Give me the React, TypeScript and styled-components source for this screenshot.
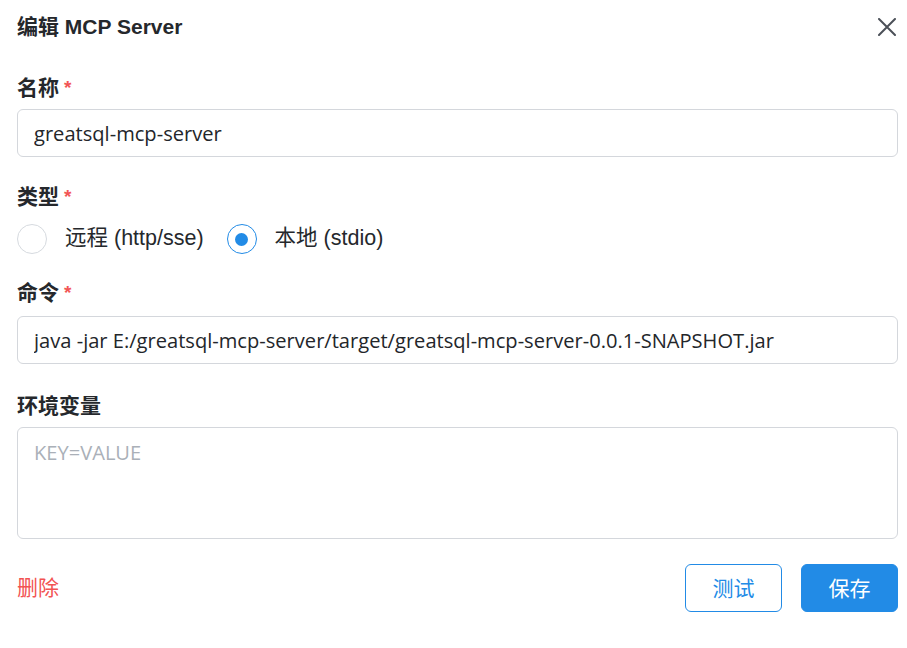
import React, { useState } from "react";
import styled, { createGlobalStyle } from "styled-components";

const Global = createGlobalStyle`
  html, body { margin: 0; padding: 0; background: #ffffff; }
  body { font-family: "Liberation Sans", Arial, "Noto Sans CJK SC", sans-serif; color: #1f2328; }
  * { box-sizing: border-box; }
`;

const BLUE = "#228be6";

const Dialog = styled.div`
  width: 907px;
  height: 648px;
  padding: 13px 9px 0 17px;
  display: flex;
  flex-direction: column;
  background: #fff;
`;

const Header = styled.div`
  display: flex;
  align-items: center;
  justify-content: space-between;
  height: 28px;
`;

const Title = styled.h2`
  margin: 0;
  font-size: 21px;
  line-height: 28px;
  height: 28px;
  font-weight: 700;
  color: #25282c;
  font-family: "Liberation Sans", Arial, "Noto Sans CJK SC", sans-serif;
`;

const CloseButton = styled.button`
  width: 28px;
  height: 28px;
  padding: 0;
  border: none;
  background: transparent;
  display: flex;
  align-items: center;
  justify-content: center;
  cursor: pointer;
  margin-right: -3px;
`;

const Form = styled.div`
  display: flex;
  flex-direction: column;
  margin-top: 35px;
  width: 881px;
`;

const Field = styled.div<{ $gap: number; $top: number }>`
  display: flex;
  flex-direction: column;
  gap: ${(p) => p.$gap}px;
  margin-top: ${(p) => p.$top}px;
`;

const Label = styled.div`
  height: 24px;
  display: flex;
  align-items: center;
  font-size: 21px;
  line-height: 1;
  font-weight: 700;
  color: #25282c;
  font-family: "Liberation Sans", Arial, "Noto Sans CJK SC", sans-serif;
  padding-bottom: 2px;
`;

const Req = styled.span`
  color: #f25656;
  margin-left: 5px;
  font-weight: 700;
  font-size: 19px;
  line-height: 1;
  align-self: flex-start;
  margin-top: 2px;
`;

const TextInput = styled.input`
  width: 100%;
  height: 48px;
  border: 1px solid #d4d7dc;
  border-radius: 6px;
  padding: 0 16px;
  font-size: 20.1px;
  font-family: "Open Sans", "Noto Sans CJK SC", sans-serif;
  color: #23262a;
  outline: none;
  background: #fff;
`;

const TextArea = styled.textarea`
  width: 100%;
  height: 112px;
  border: 1px solid #d4d7dc;
  border-radius: 6px;
  padding: 11px 16px;
  font-size: 20.1px;
  line-height: 28px;
  font-family: "Open Sans", "Noto Sans CJK SC", sans-serif;
  color: #23262a;
  resize: none;
  outline: none;
  display: block;
  &::placeholder { color: #aab0b8; }
`;

const RadioRow = styled.div`
  display: flex;
  align-items: center;
  height: 30px;
  gap: 23px;
`;

const RadioOption = styled.label`
  display: flex;
  align-items: center;
  height: 30px;
  gap: 18px;
  cursor: pointer;
  font-size: 21.5px;
  line-height: 1;
  color: #25282c;
  font-family: "Liberation Sans", Arial, "Noto Sans CJK SC", sans-serif;
`;

const RadioCircle = styled.span<{ $checked: boolean }>`
  width: 30px;
  height: 30px;
  flex: none;
  border-radius: 50%;
  border: 1px solid ${(p) => (p.$checked ? BLUE : "#d6dadf")};
  display: flex;
  align-items: center;
  justify-content: center;
  background: #fff;
  &::after {
    content: "";
    width: 13px;
    height: 13px;
    border-radius: 50%;
    background: ${BLUE};
    display: ${(p) => (p.$checked ? "block" : "none")};
  }
`;

const Footer = styled.div`
  display: flex;
  align-items: center;
  justify-content: space-between;
  margin-top: 25px;
  width: 881px;
  height: 48px;
`;

const DangerLink = styled.button`
  border: none;
  background: transparent;
  padding: 0 0 3px;
  color: #f25252;
  font-size: 21px;
  line-height: 1;
  font-family: "Noto Sans CJK SC", sans-serif;
  cursor: pointer;
`;

const Actions = styled.div`
  display: flex;
  gap: 19px;
`;

const Button = styled.button<{ $primary?: boolean }>`
  width: 97px;
  height: 48px;
  border-radius: 6px;
  border: 1px solid ${BLUE};
  background: ${(p) => (p.$primary ? BLUE : "#fff")};
  color: ${(p) => (p.$primary ? "#fff" : BLUE)};
  font-size: 21px;
  line-height: 1;
  font-family: "Noto Sans CJK SC", sans-serif;
  cursor: pointer;
  display: flex;
  align-items: center;
  justify-content: center;
  padding: 0 0 2px;
`;

export default function App() {
  const [type, setType] = useState<"remote" | "local">("local");
  return (
    <>
      <Global />
      <Dialog>
        <Header>
          <Title>编辑 MCP Server</Title>
          <CloseButton aria-label="close">
            <svg width="18" height="18" viewBox="0 0 18 18">
              <path d="M1 1 L17 17 M17 1 L1 17" stroke="#4b5058" strokeWidth="2" strokeLinecap="round" />
            </svg>
          </CloseButton>
        </Header>
        <Form>
          <Field $gap={9} $top={0}>
            <Label>
              名称<Req>*</Req>
            </Label>
            <TextInput defaultValue="greatsql-mcp-server" />
          </Field>
          <Field $gap={15} $top={28}>
            <Label>
              类型<Req>*</Req>
            </Label>
            <RadioRow>
              <RadioOption onClick={() => setType("remote")}>
                <RadioCircle $checked={type === "remote"} />
                远程 (http/sse)
              </RadioOption>
              <RadioOption onClick={() => setType("local")}>
                <RadioCircle $checked={type === "local"} />
                本地 (stdio)
              </RadioOption>
            </RadioRow>
          </Field>
          <Field $gap={11} $top={27}>
            <Label>
              命令<Req>*</Req>
            </Label>
            <TextInput defaultValue="java -jar E:/greatsql-mcp-server/target/greatsql-mcp-server-0.0.1-SNAPSHOT.jar" />
          </Field>
          <Field $gap={9} $top={30}>
            <Label>环境变量</Label>
            <TextArea placeholder="KEY=VALUE" />
          </Field>
        </Form>
        <Footer>
          <DangerLink>删除</DangerLink>
          <Actions>
            <Button>测试</Button>
            <Button $primary>保存</Button>
          </Actions>
        </Footer>
      </Dialog>
    </>
  );
}
